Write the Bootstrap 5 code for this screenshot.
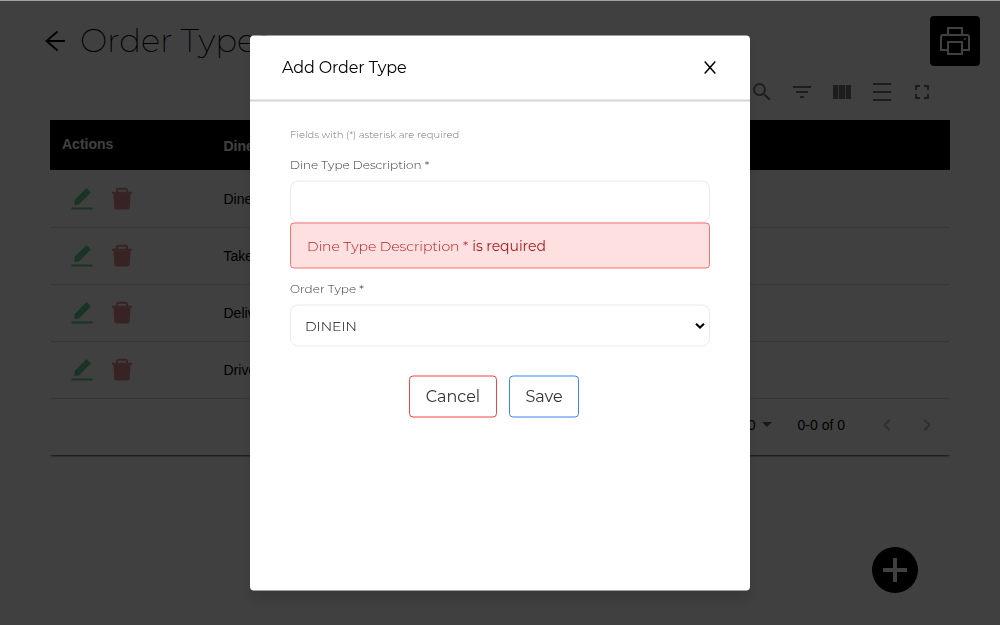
<!DOCTYPE html>
<html lang="en">
<head>
<meta charset="utf-8">
<meta name="viewport" content="width=device-width, initial-scale=1">
<title>Order Types</title>
<link href="https://cdn.jsdelivr.net/npm/bootstrap@5.3.0/dist/css/bootstrap.min.css" rel="stylesheet">
<style>
  body { font-family: Montserrat, Inter, "Open Sans", sans-serif; font-weight: 300; color: #000; height: 625px; overflow: hidden; background: #fff; }
  .page { height: 625px; padding: 16px 20px 0 45px; }
  .page-title { font-size: 32.5px; font-weight: 200; line-height: 50px; letter-spacing: -.1px; margin: 0 0 0 14px; }
  .print-btn { width: 50px; height: 50px; background: #000; border: 0; border-radius: 4px; }
  .tools { height: 52px; gap: 16px; padding: 0 16px 0 0; margin: 0 30px 2px 0; color: rgba(0,0,0,.54); }
  .order-grid { margin: 0 30px 0 5px; font: 400 14px/20px "Liberation Sans", sans-serif; box-shadow: 0 2px 2px -1px rgba(0,0,0,.75); height: 335px; clip-path: inset(0 0 -4px 0); }
  .grid-head { height: 50px; margin-bottom: 1px; padding-top: 2px; background: #000; color: #fff; font-weight: 700; }
  .grid-line { height: 57px; border-bottom: 1px solid #d8d8d8; }
  .col-actions { width: 173.5px; padding-left: 12px; flex: none; }
  .row-icons { padding-left: 21px; gap: 18px; width: 173.5px; flex: none; }
  .pager { height: 52px; padding-right: 11px; }
  .page-prev { margin: 0 16px 0 6px; }
  .fab { position: absolute; left: 872px; top: 547px; width: 46px; height: 46px; background: #000; }
  .veil { background: rgba(0,0,0,.75); border-top: 1px solid #a0a0a0; }
  .dialog-box { width: 500px; height: 555px; border-radius: 4px; transform: translateY(-.5px); box-shadow: 0 10px 14px rgba(0,0,0,.13); }
  .dialog-head { height: 66px; border-bottom: 2px solid #d4d4d4; padding: 1px 32px 0; }
  .dialog-title { font-size: 16px; font-weight: 400; letter-spacing: -.14px; margin: 0; }
  .dialog-body { padding: 25px 40px 0; }
  .hint { font-size: 10px; line-height: 15px; color: #777; letter-spacing: 0; }
  .field-label { font-size: 12px; line-height: 18px; letter-spacing: 0; color: #333; margin: 14px 0 7px; }
  .field-label-next { margin-top: 11px; }
  .field-box { height: 42px; border: 1px solid #e8eaed; border-radius: 8px; padding: 2px 4px 0 14px; font-size: 14px; }
  .error-box { height: 46px; background: #fee0e0; border: 1px solid #f87171; border-radius: 4px; padding: 2px 16px 0; font-size: 14px; letter-spacing: -.05px; color: #b91c1c; }
  .err-msg { color: #a81c1c; }
  .outline-btn { height: 42px; border: 1px solid; border-radius: 4px; background: #fff; font-size: 16px; color: #333; }
  .actions-row { padding-top: 29px; }
</style>
</head>
<body>
<main class="page">
  <header class="d-flex align-items-start justify-content-between">
    <div class="d-flex align-items-center">
      <svg class="back-arrow" width="21" height="22" viewBox="0 0 21 22" fill="none" stroke="#000" stroke-width="1.800"><path d="M20 11H1.500M12.500 1.500L1.500 11l11 9.500"/></svg>
      <h1 class="page-title">Order Types</h1>
    </div>
    <button class="print-btn d-flex align-items-center justify-content-center p-0" aria-label="Print">
      <svg width="32" height="30" viewBox="0 0 32 30" fill="none" stroke="#fff" stroke-width="2"><path d="M9 9V2h14v7M9 24H2V11q0-2 2-2h24q2 0 2 2v13h-7M9 16h14v12H9z"/><circle cx="26" cy="13" r="1" fill="#fff" stroke="none"/></svg>
    </button>
  </header>
  <div class="tools d-flex align-items-center justify-content-end">
    <svg width="24" height="24" viewBox="0 0 24 24" fill="currentColor"><path d="M15.500 14h-.79l-.28-.27A6.470 6.470 0 0 0 16 9.500 6.500 6.500 0 1 0 9.500 16c1.610 0 3.090-.59 4.230-1.570l.27.28v.79l5 4.990L20.490 19zm-6 0C7.010 14 5 11.990 5 9.500S7.010 5 9.500 5 14 7.010 14 9.500 11.990 14 9.500 14z"/></svg>
    <svg width="24" height="24" viewBox="0 0 24 24" fill="currentColor"><path d="M10 18h4v-2h-4zM3 6v2h18V6zm3 7h12v-2H6z"/></svg>
    <svg width="24" height="24" viewBox="0 0 24 24" fill="currentColor"><path d="M3 5h5.300v14H3zM9 5h6v14H9zM15.700 5H21v14h-5.300z"/></svg>
    <svg width="24" height="24" viewBox="0 0 24 24" fill="currentColor"><path d="M3 3h18v2H3zM3 11h18v2H3zM3 19h18v2H3z"/></svg>
    <svg width="24" height="24" viewBox="0 0 24 24" fill="currentColor"><path d="M7 14H5v5h5v-2H7zm-2-4h2V7h3V5H5zm12 7h-3v2h5v-5h-2zM14 5v2h3v3h2V5z"/></svg>
  </div>
  <section class="order-grid">
    <div class="grid-head d-flex align-items-center"><span class="col-actions pb-1">Actions</span><span>Dine Type</span></div>
    <div class="grid-line d-flex align-items-center"><div class="row-icons d-flex"><svg width="22" height="24"><use href="#edit"/></svg><svg width="22" height="24"><use href="#trash"/></svg></div><span>Dine In</span></div>
    <div class="grid-line d-flex align-items-center"><div class="row-icons d-flex"><svg width="22" height="24"><use href="#edit"/></svg><svg width="22" height="24"><use href="#trash"/></svg></div><span>Take Away</span></div>
    <div class="grid-line d-flex align-items-center"><div class="row-icons d-flex"><svg width="22" height="24"><use href="#edit"/></svg><svg width="22" height="24"><use href="#trash"/></svg></div><span>Delivery</span></div>
    <div class="grid-line d-flex align-items-center"><div class="row-icons d-flex"><svg width="22" height="24"><use href="#edit"/></svg><svg width="22" height="24"><use href="#trash"/></svg></div><span>Drive Thru</span></div>
    <div class="pager d-flex align-items-center justify-content-end">
      <span>10</span><svg class="ms-1 me-4" width="14" height="6"><path d="M2 0h10L7 5z" fill="#666"/></svg>
      <span class="me-4">0-0 of 0</span>
      <svg class="page-prev" width="24" height="24" viewBox="0 0 24 24" fill="#b8b8b8"><path d="M15.410 7.410 14 6l-6 6 6 6 1.410-1.410L10.830 12z"/></svg>
      <svg width="24" height="24" viewBox="0 0 24 24" fill="#b8b8b8"><path d="M8.590 16.590 13.170 12 8.590 7.410 10 6l6 6-6 6z"/></svg>
    </div>
  </section>
  <button class="fab btn rounded-circle border-0 p-0" aria-label="Add"><svg class="d-block mx-auto" width="24" height="24"><path d="M10 0h4v10h10v4H14v10h-4V14H0v-4h10z" fill="#fff"/></svg></button>
</main>

<svg class="d-none">
  <symbol id="edit" viewBox="0 0 22 24"><path d="M3.500 18v-5L15.500 1 20 5.500 8 17.500z" fill="#66cc90"/><path d="M.5 20.500h21v2H.5z" fill="#66cc90"/></symbol>
  <symbol id="trash" viewBox="0 0 22 24"><path d="M2.500 6.500h17L18.700 20.500q-.2 2-2.200 2h-11q-2 0-2.200-2z" fill="#d98c8c"/><path d="M1 5.800h20M6 5.500V3.300q0-1.500 1.500-1.500h7q1.500 0 1.500 1.500v2.200" fill="none" stroke="#d98c8c" stroke-width="2"/></symbol>
</svg>

<div class="veil position-fixed top-0 start-0 w-100 h-100 d-flex align-items-center justify-content-center">
  <div class="dialog-box bg-white" role="dialog">
    <div class="dialog-head d-flex align-items-center justify-content-between">
      <h2 class="dialog-title">Add Order Type</h2>
      <svg width="16" height="14" viewBox="0 0 16 14" fill="none" stroke="#000" stroke-width="1.500"><path d="M4.700 1 15.300 13M15.300 1 4.700 13" transform="translate(-2 0)"/></svg>
    </div>
    <div class="dialog-body">
      <div class="hint">Fields with (*) asterisk are required</div>
      <div class="field-label">Dine Type Description *</div>
      <div class="field-box"></div>
      <div class="error-box d-flex align-items-center"><span class="err-name">Dine Type Description *</span><span class="err-msg fw-normal ms-1">is required</span></div>
      <div class="field-label field-label-next">Order Type *</div>
      <div class="field-box d-flex align-items-center justify-content-between"><span>DINEIN</span>
        <svg width="10" height="7" fill="none" stroke="#000" stroke-width="2"><path d="M1 1.200 5 5l4-3.800"/></svg></div>
      <div class="actions-row d-flex justify-content-center">
        <button class="outline-btn" style="width:88px;border-color:#ef4444">Cancel</button>
        <button class="outline-btn" style="width:70px;border-color:#3b82f6;margin:0 12px">Save</button>
      </div>
    </div>
  </div>
</div>
<script src="https://cdn.jsdelivr.net/npm/bootstrap@5.3.0/dist/js/bootstrap.bundle.min.js"></script>
</body>
</html>
